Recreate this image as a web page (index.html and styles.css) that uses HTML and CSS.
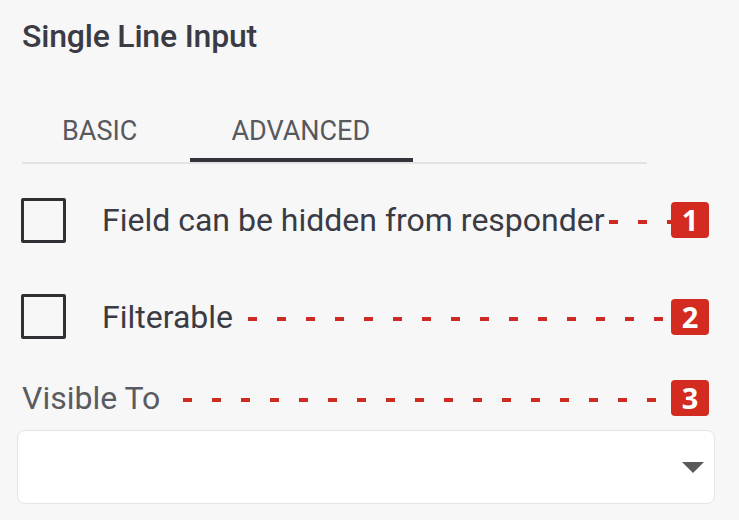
FILE: index.html
```html
<!DOCTYPE html>
<html lang="en">
<head>
<meta charset="utf-8">
<title>Single Line Input</title>
<link rel="stylesheet" href="styles.css">
</head>
<body>
<div class="panel">
  <h1 class="title">Single Line Input</h1>
  <div class="tabs">
    <div class="tab">BASIC</div>
    <div class="tab tab-active">ADVANCED</div>
  </div>
  <div class="row row-first">
    <span class="checkbox"></span>
    <span class="label">Field can be hidden from responder</span>
    <span class="leader leader-1"></span>
    <span class="badge">1</span>
  </div>
  <div class="row row-second">
    <span class="checkbox"></span>
    <span class="label">Filterable</span>
    <span class="leader leader-2"></span>
    <span class="badge">2</span>
  </div>
  <div class="row row-third">
    <span class="field-label">Visible To</span>
    <span class="leader leader-3"></span>
    <span class="badge">3</span>
  </div>
  <div class="select">
    <svg class="caret" width="22" height="11" viewBox="0 0 22 11"><path d="M0 0 H22 L11 11 Z" fill="#5a5a5a"/></svg>
  </div>
</div>
</body>
</html>
```

FILE: styles.css
```css
html, body {
  margin: 0;
  padding: 0;
  background: #f7f7f7;
}
body {
  font-family: Roboto, "Liberation Sans", sans-serif;
  color: #3a3b44;
}
.panel {
  width: 687px;
  padding: 18px 0 0 22px;
}
.title {
  margin: 0;
  font-size: 32px;
  font-weight: 500;
  line-height: 36px;
  letter-spacing: -0.2px;
  color: #3a3b44;
}
.tabs {
  display: flex;
  gap: 13px;
  width: 625px;
  margin-top: 56px;
  border-bottom: 2px solid #e3e3e3;
}
.tab {
  padding: 6px 40px 12px;
  font-size: 27px;
  line-height: 30px;
  color: #58595e;
  border-bottom: 4px solid transparent;
}
.tab-active {
  padding-left: 41px;
  padding-right: 43px;
  border-bottom-color: #34353b;
}
.row {
  display: flex;
  align-items: center;
}
.row-first {
  margin-top: 34px;
  height: 44px;
}
.row-second {
  margin-top: 52px;
  height: 45px;
}
.row-third {
  margin-top: 41px;
  height: 36px;
}
.checkbox {
  box-sizing: border-box;
  width: 45px;
  height: 45px;
  border: 3px solid #2f3034;
  border-radius: 2px;
  margin-left: -1px;
  margin-right: 36px;
  flex: none;
}
.label {
  font-size: 32px;
  color: #3a3b44;
  white-space: nowrap;
}
.field-label {
  font-size: 32px;
  color: #5a5b60;
}
.leader {
  flex: 1;
  height: 4px;
  margin-top: 4px;
  background: repeating-linear-gradient(to right, #cc2a22 0 9px, transparent 9px 29px);
}
.leader-1 { margin-left: 4px; }
.leader-2 { margin-left: 15px; }
.leader-3 { margin-left: 23px; }
.badge {
  flex: none;
  width: 38px;
  height: 36px;
  border-radius: 4px;
  background: #d42b20;
  color: #ffffff;
  font-family: "Open Sans", sans-serif;
  font-weight: 700;
  font-size: 29px;
  line-height: 36px;
  text-align: center;
}
.select {
  box-sizing: border-box;
  height: 74px;
  margin: 14px -6px 0 -5px;
  background: #ffffff;
  border: 1px solid #e4e4e4;
  border-radius: 8px;
  display: flex;
  align-items: center;
  justify-content: flex-end;
  padding-right: 10px;
}
.caret {
  display: block;
}
```
